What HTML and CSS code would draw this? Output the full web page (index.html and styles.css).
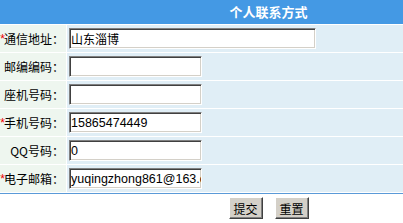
FILE: index.html
```html
<!DOCTYPE html>
<html>
<head>
<meta charset="utf-8">
<link rel="stylesheet" href="styles.css">
</head>
<body>
<div class="page">
  <div class="head">个人联系方式</div>
  <div class="form">
    <div class="label"><span class="req">*</span>通信地址：</div>
    <div class="field"><input class="inp wide" type="text" value="山东淄博"></div>
    <div class="label">邮编编码：</div>
    <div class="field"><input class="inp" type="text" value=""></div>
    <div class="label">座机号码：</div>
    <div class="field"><input class="inp" type="text" value=""></div>
    <div class="label"><span class="req">*</span>手机号码：</div>
    <div class="field"><input class="inp" type="text" value="15865474449"></div>
    <div class="label">QQ号码：</div>
    <div class="field"><input class="inp" type="text" value="0"></div>
    <div class="label"><span class="req">*</span>电子邮箱：</div>
    <div class="field"><input class="inp" type="text" value="yuqingzhong861@163.com"></div>
  </div>
  <div class="actions">
    <button class="btn" type="button">提交</button>
    <button class="btn" type="button">重置</button>
  </div>
</div>
</body>
</html>
```
FILE: styles.css
```css
html, body {
  margin: 0;
  padding: 0;
  overflow: hidden;
  background: #fff;
}
body {
  font-family: "Noto Sans CJK SC", "Liberation Sans", sans-serif;
  font-size: 12px;
  color: #000;
}
.page {
  width: 537px;
}
.head {
  height: 24px;
  line-height: 24px;
  background: #4499e4;
  color: #fff;
  font-weight: bold;
  font-size: 13px;
  text-align: center;
  border-bottom: 1px solid #fff;
}
.form {
  display: grid;
  grid-template-columns: 66px 1fr;
  grid-auto-rows: 27px;
  column-gap: 1px;
  row-gap: 1px;
  background: #fff;
  border-bottom: 1px solid #5a9ad8;
  padding-bottom: 1px;
}
.label {
  background: #eef6ef;
  display: flex;
  justify-content: flex-end;
  align-items: center;
  white-space: nowrap;
  overflow: hidden;
  padding-right: 2px;
  font-size: 12px;
}
.req {
  color: #e00;
  font-family: "Liberation Sans", sans-serif;
  letter-spacing: -1px;
}
.field {
  background: #e0eef6;
  display: flex;
  align-items: center;
  padding-left: 2px;
}
.inp {
  box-sizing: border-box;
  width: 133px;
  height: 21px;
  margin: 0;
  padding: 0 0 0 1px;
  background: #fff;
  border: 1px solid;
  border-color: #808080 #fff #fff #808080;
  box-shadow: inset 1px 1px 0 #404040, inset -1px -1px 0 #d4d0c8;
  font-family: "Liberation Sans", "Noto Sans CJK SC", sans-serif;
  font-size: 12.5px;
  color: #000;
  outline: none;
}
.inp.wide {
  width: 247px;
  font-family: "Noto Sans CJK SC", sans-serif;
  font-size: 12px;
}
.actions {
  display: flex;
  justify-content: center;
  gap: 12px;
  padding-top: 3px;
}
.btn {
  box-sizing: border-box;
  width: 34px;
  height: 22px;
  margin: 0;
  padding: 0;
  background: #d4d0c8;
  border: 1px solid;
  border-color: #fff #404040 #404040 #fff;
  box-shadow: inset -1px -1px 0 #808080;
  font-family: "Noto Sans CJK SC", sans-serif;
  font-size: 12px;
  color: #000;
}
```
